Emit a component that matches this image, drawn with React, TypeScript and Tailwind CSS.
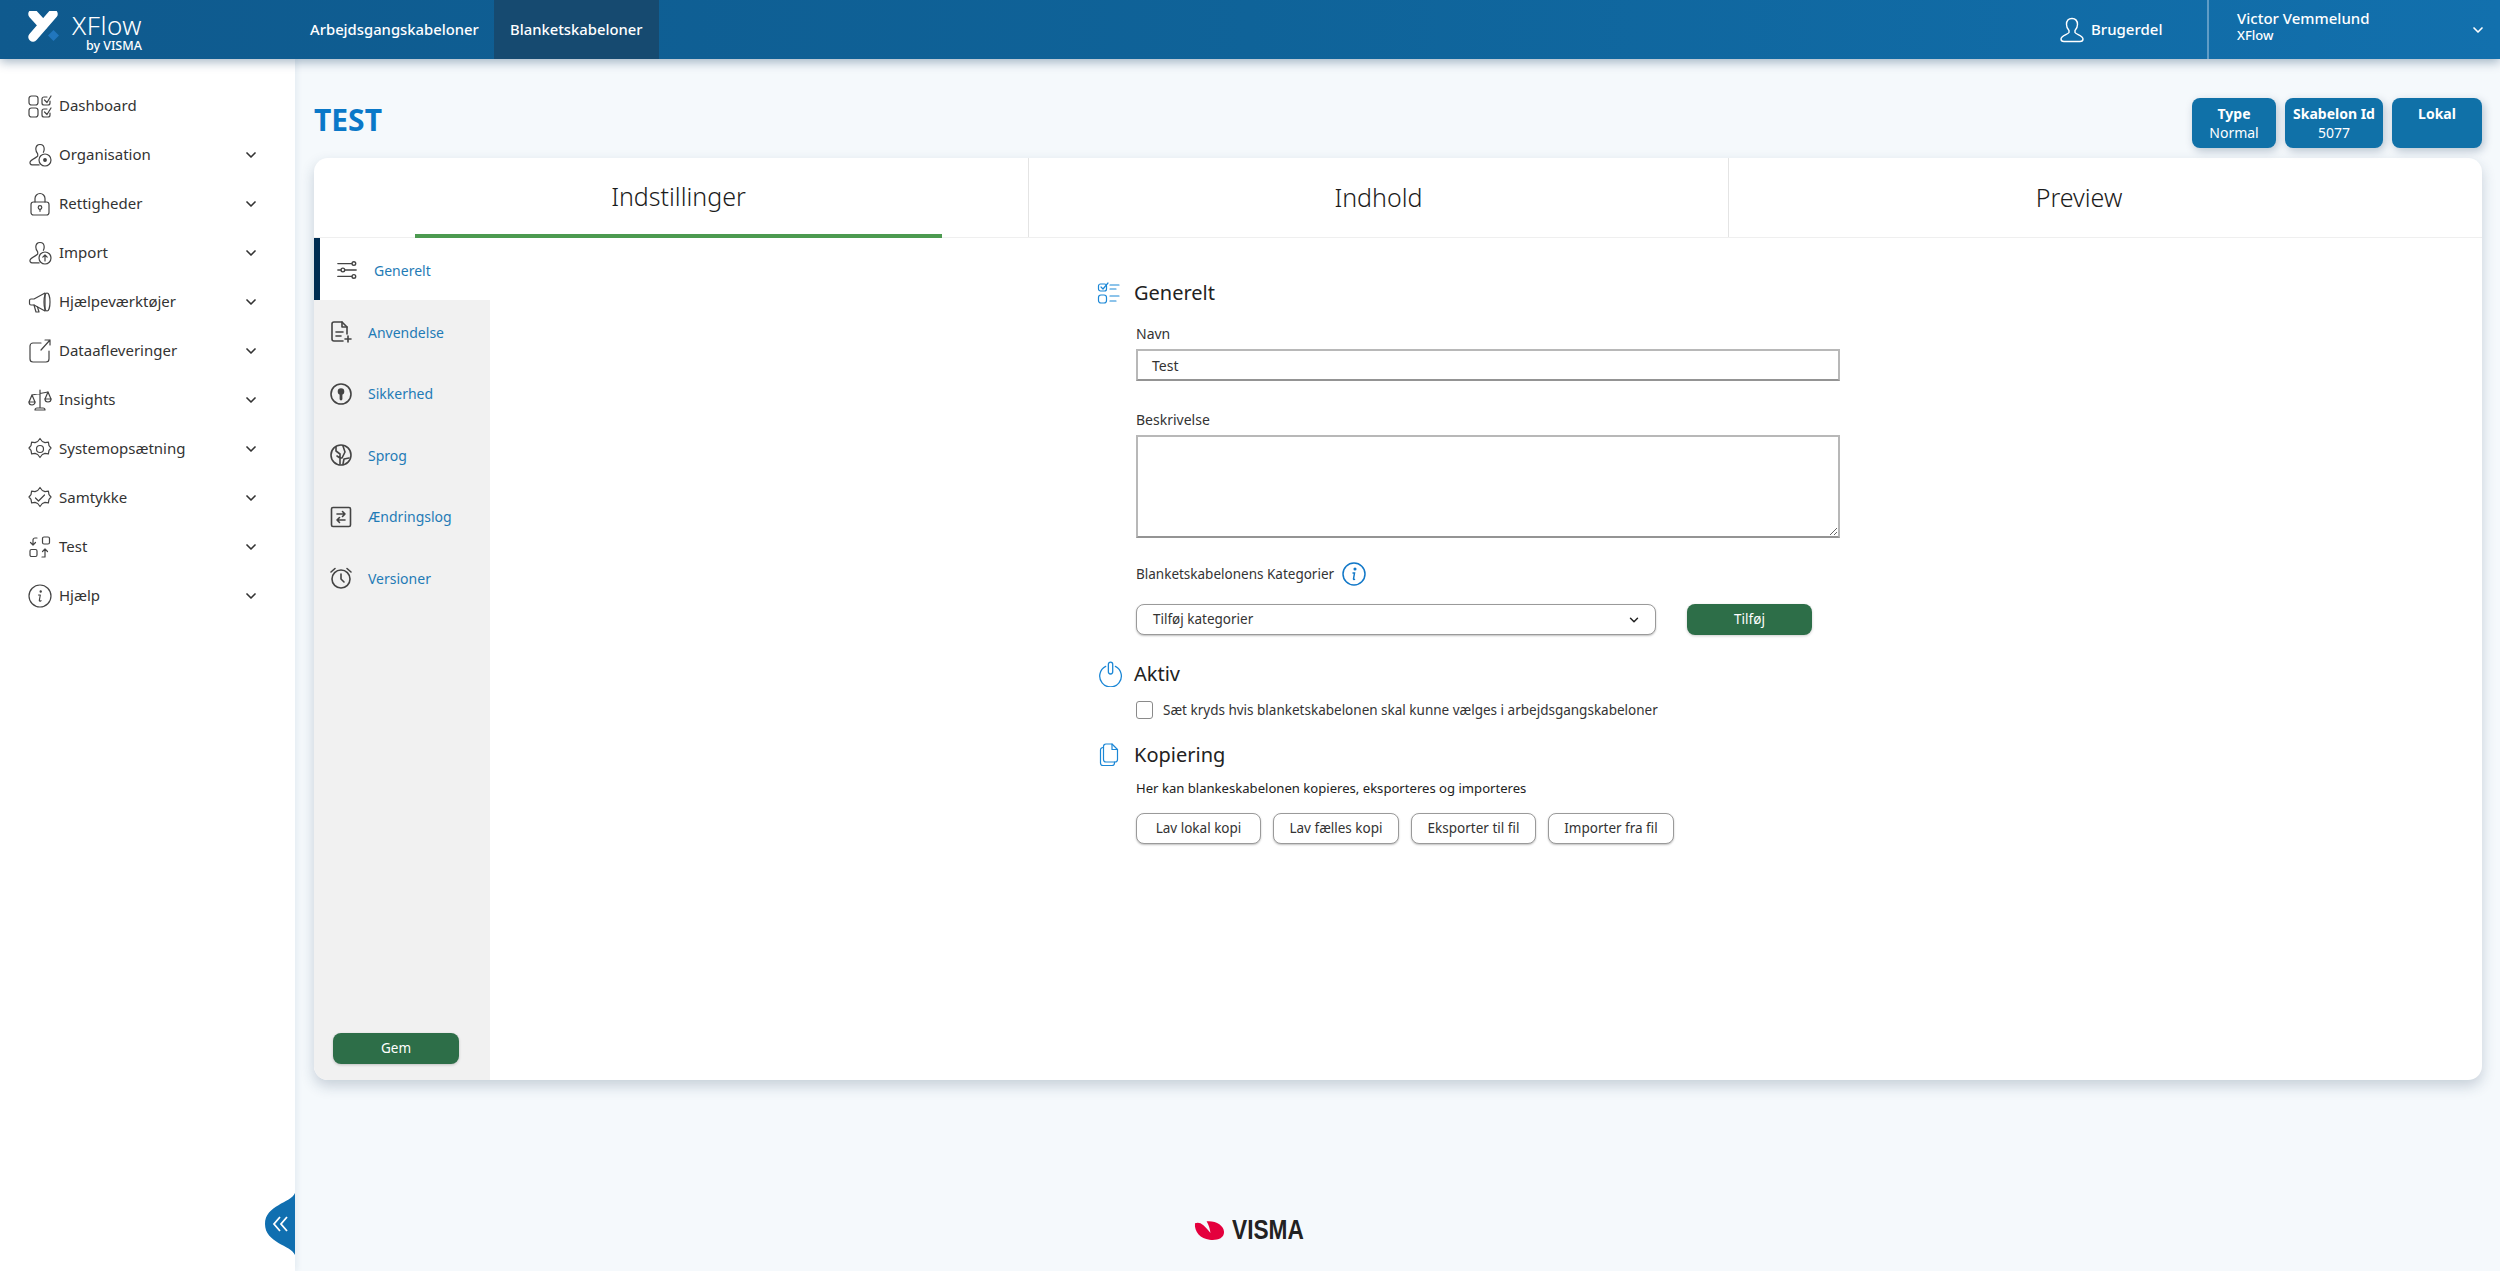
import type { ReactNode } from "react";
import { ChevronDown } from "lucide-react";

function Ico({ size = 24, stroke = 1.2, className = "", children }: { size?: number; stroke?: number; className?: string; children: ReactNode }) {
  return (
    <svg
      width={size}
      height={size}
      viewBox="0 0 24 24"
      fill="none"
      stroke="currentColor"
      strokeWidth={stroke}
      strokeLinecap="round"
      strokeLinejoin="round"
      className={className}
    >
      {children}
    </svg>
  );
}

const personPath = "M12 1.5c-2.6 0-4.2 2-4.2 4.6 0 2 .9 3.6 1.9 4.8v2.2c-.6 1.2-6.7 3.6-7.6 5.8-.5 1.4.4 3 2 3h7";
const gearPath = "M12 1.500 14.300 4.500l2.700 1.100 3.400-.4.600 3.400 2 2.400-2 2.400-.6 3.400-3.400-.4-2.700 1.100-2.300 3-2.300-3-2.700-1.100-3.400.4-.6-3.400-2-2.400 2-2.400.6-3.400 3.400.4 2.700-1.100z";

const menu: { label: string; icon: ReactNode; chevron?: boolean }[] = [
  {
    label: "Dashboard",
    icon: (
      <>
        <rect x="1" y="2" width="9" height="9" rx="2.5" />
        <rect x="1" y="14" width="9" height="9" rx="2.5" />
        <path d="M22 7v2a2 2 0 0 1-2 2h-4a2 2 0 0 1-2-2V5a2 2 0 0 1 2-2h3M16.5 6l2.5 2.5L23 2" />
        <path d="M22 19v2a2 2 0 0 1-2 2h-4a2 2 0 0 1-2-2v-4a2 2 0 0 1 2-2h3M16.5 18l2.5 2.5L23 14" />
      </>
    ),
  },
  {
    label: "Organisation",
    chevron: true,
    icon: (
      <>
        <path d={personPath} />
        <path d="M12 1.5c2.6 0 4.2 2 4.2 4.6 0 1.2-.3 2.2-.8 3.2" />
        <circle cx="17" cy="17" r="6" />
        <circle cx="17" cy="17" r="1.3" fill="currentColor" />
      </>
    ),
  },
  {
    label: "Rettigheder",
    chevron: true,
    icon: (
      <>
        <rect x="3" y="10" width="18" height="13" rx="2.5" />
        <path d="M7 10V6.5a5 5 0 0 1 10 0V10" />
        <circle cx="12" cy="15.5" r="1.8" />
        <path d="M12 17.3v2" />
      </>
    ),
  },
  {
    label: "Import",
    chevron: true,
    icon: (
      <>
        <path d={personPath} />
        <path d="M12 1.5c2.6 0 4.2 2 4.2 4.6 0 1.2-.3 2.2-.8 3.2" />
        <circle cx="17" cy="17" r="6" />
        <path d="M17 20v-6M14.8 16.2 17 14l2.2 2.2" />
      </>
    ),
  },
  {
    label: "Hjælpeværktøjer",
    chevron: true,
    icon: (
      <>
        <path d="M17 3 6 9H3a1.5 1.5 0 0 0-1.5 1.5v3A1.5 1.5 0 0 0 3 15h3l11 6z" />
        <path d="M6 15l2 7h3l-1.5-5" />
        <ellipse cx="19" cy="12" rx="3" ry="9" />
      </>
    ),
  },
  {
    label: "Dataafleveringer",
    chevron: true,
    icon: (
      <>
        <path d="M13 4H5a3 3 0 0 0-3 3v13a3 3 0 0 0 3 3h13a3 3 0 0 0 3-3v-8" />
        <path d="M13 11 22 1M17 1h5v5" />
      </>
    ),
  },
  {
    label: "Insights",
    chevron: true,
    icon: (
      <>
        <path d="M12 2v18M7 22h10a2 2 0 0 0-2-2H9a2 2 0 0 0-2 2zM4 7l16-3" />
        <path d="M4 7 1 14h6zM20 4l-3 7h6z" />
        <path d="M1 14a3 3 0 0 0 6 0M17 11a3 3 0 0 0 6 0" />
      </>
    ),
  },
  {
    label: "Systemopsætning",
    chevron: true,
    icon: (
      <>
        <path d={gearPath} />
        <circle cx="12" cy="12" r="3.500" />
      </>
    ),
  },
  {
    label: "Samtykke",
    chevron: true,
    icon: (
      <>
        <path d={gearPath} />
        <path d="M7.500 12l3 3 6-6" />
      </>
    ),
  },
  {
    label: "Test",
    chevron: true,
    icon: (
      <>
        <rect x="14.500" y="2" width="7" height="7" rx="1.500" />
        <rect x="2" y="14.500" width="7" height="7" rx="1.500" />
        <path d="M9 3H7a2 2 0 0 0-2 2v5M2.500 7.500 5 10l2.500-2.500" />
        <path d="M14 22h3v-8M14.500 16.500 17 14l2.500 2.500" />
      </>
    ),
  },
  {
    label: "Hjælp",
    chevron: true,
    icon: (
      <>
        <circle cx="12" cy="12" r="11" />
        <path d="M10.500 11h1.800l-1 5.500c0 .8.800.8 1.700.2" />
        <circle cx="12.700" cy="7.500" r=".6" fill="currentColor" />
      </>
    ),
  },
];

const subNav: { label: string; icon: ReactNode }[] = [
  {
    label: "Anvendelse",
    icon: (
      <>
        <path d="M14 21H5a2 2 0 0 1-2-2V4a2 2 0 0 1 2-2h8l5 5v7" />
        <path d="M13 2v5h5M7 12h7M7 16h5M19 16v6M16 19h6" />
      </>
    ),
  },
  {
    label: "Sikkerhed",
    icon: (
      <>
        <circle cx="12" cy="12" r="10" />
        <circle cx="12" cy="9.500" r="2.500" fill="currentColor" />
        <path d="M12 11v6" strokeWidth={2.800} />
      </>
    ),
  },
  {
    label: "Sprog",
    icon: (
      <>
        <circle cx="12" cy="12" r="10" />
        <path d="M7 4v4l4 3 0 4 2 0 3-6-2-6M8 13l3 2v6M14 21l1-5 5-1" />
      </>
    ),
  },
  {
    label: "Ændringslog",
    icon: (
      <>
        <rect x="2.500" y="2.500" width="19" height="19" rx="1.500" />
        <path d="M8 9h8M13.500 6.500 16 9l-2.500 2.500M16 15H8M10.500 12.500 8 15l2.500 2.500" />
      </>
    ),
  },
  {
    label: "Versioner",
    icon: (
      <>
        <circle cx="12" cy="13" r="9" />
        <path d="M12 8v5l3 3M2 6l4-3.500M22 6l-4-3.500" />
      </>
    ),
  },
];

function Badge({ title, value, w }: { title: string; value?: string; w: string }) {
  return (
    <div className={`${w} h-[50px] rounded-lg bg-[#1071a8] text-white text-center text-[14px] leading-[19px] pt-[6px] shadow-[2px_3px_8px_rgba(0,40,80,0.25)]`}>
      <div className="font-bold">{title}</div>
      <div>{value}</div>
    </div>
  );
}

function SectionHead({ icon, children }: { icon: ReactNode; children: ReactNode }) {
  return (
    <div className="flex items-center h-[26px]">
      <div className="w-[44px] pl-[7px] flex text-[#1b87d6]">{icon}</div>
      <h2 className="text-[20px] text-[#222]">{children}</h2>
    </div>
  );
}

function OutlineButton({ label, w }: { label: string; w: string }) {
  return (
    <div className={`${w} h-[31px] flex items-center justify-center rounded-lg bg-white border border-[#9a9a9a] text-[13.5px] text-[#333] shadow-[0_1px_2px_rgba(0,0,0,0.25)]`}>
      {label}
    </div>
  );
}

export default function App() {
  return (
    <div className="h-[1271px] overflow-hidden flex flex-col bg-[#f5f9fc] font-['Noto_Sans','Open_Sans',sans-serif]">
      <header className="relative z-20 h-[59px] shrink-0 flex items-stretch text-white bg-gradient-to-r from-[#0f5a8e] via-[#0f6399] to-[#1270ad] shadow-[0_3px_10px_rgba(0,50,90,0.35)]">
        <div className="w-[310px] flex pl-[28px] pt-[11px]">
          <svg width="32" height="31" viewBox="0 0 32 31">
            <path d="M5 3l10 11" fill="none" stroke="#fff" strokeWidth="9.500" strokeLinecap="round" />
            <path d="M25 3 5 26" fill="none" stroke="#fff" strokeWidth="9.500" strokeLinecap="round" />
            <path d="M25.500 19l5.500 5.500-5.500 5.500-5.500-5.500z" fill="#2176bd" />
          </svg>
          <div className="ml-[12px] pt-[1px] flex flex-col items-end">
            <span className="text-[26px] leading-[27px] font-light tracking-[0.5px]">XFlow</span>
            <span className="text-[12.5px] leading-[14px] font-medium">by VISMA</span>
          </div>
        </div>
        <div className="flex items-center text-[14.8px] font-medium w-[184px]">Arbejdsgangskabeloner</div>
        <div className="flex items-center bg-[#164a70] px-[16px] text-[14.8px] font-medium">Blanketskabeloner</div>
        <div className="flex-1" />
        <div className="flex items-center w-[147px] text-[15px] font-medium">
          <svg width="24" height="26" viewBox="0 0 24 26" fill="none" stroke="currentColor" strokeWidth="1.400" className="mr-[7px]">
            <path d="M12 1.500c-3.500 0-5.500 2.500-5.500 6 0 2.500 1 4.500 2.500 6v2c-1 1.800-8 3.500-8 6.500 0 1.500 1 2.500 3 2.500h16c2 0 3-1 3-2.500 0-3-7-4.700-8-6.500v-2c1.500-1.500 2.500-3.500 2.500-6 0-3.500-2-6-5.500-6z" />
          </svg>
          Brugerdel
        </div>
        <div className="w-[2px] bg-[#5f9cc6]" />
        <div className="flex-1 max-w-[291px] flex items-center pl-[28px] pr-[14px]">
          <div className="flex-1 -mt-[7px]">
            <div className="text-[15px] leading-[17px] font-medium">Victor Vemmelund</div>
            <div className="text-[13px] leading-[16px] font-medium">XFlow</div>
          </div>
          <ChevronDown size={16} strokeWidth={2.500} />
        </div>
      </header>

      <div className="flex-1 flex min-h-0">
        <aside className="relative z-10 w-[295px] shrink-0 bg-white pt-[22px] shadow-[2px_0_6px_rgba(30,80,120,0.08)]">
          {menu.map((item) => (
            <div key={item.label} className="h-[49px] flex items-center pl-[28px] pr-[36px] text-[#333]">
              <Ico className="shrink-0 mr-[7px] text-[#444]">{item.icon}</Ico>
              <span className="flex-1 text-[15px]">{item.label}</span>
              {item.chevron && <ChevronDown size={16} strokeWidth={2.500} className="text-[#333]" />}
            </div>
          ))}
          <svg width="30" height="62" viewBox="0 0 30 62" className="absolute right-0 top-[1134px]">
            <path d="M30 0v62C26 52 0 50 0 31S26 10 30 0z" fill="#106fb0" />
            <path d="M15 24l-6 7 6 7M22 24l-6 7 6 7" fill="none" stroke="#fff" strokeWidth="1.800" />
          </svg>
        </aside>

        <main className="flex-1 min-w-0 pl-[19px] pr-[18px] pt-[39px]">
          <div className="flex items-start justify-between h-[60px]">
            <h1 className="text-[30px] leading-[40px] font-bold text-[#0a78c8] mt-[2px]">TEST</h1>
            <div className="flex gap-[9px]">
              <Badge title="Type" value="Normal" w="w-[84px]" />
              <Badge title="Skabelon Id" value="5077" w="w-[98px]" />
              <Badge title="Lokal" w="w-[90px]" />
            </div>
          </div>

          <section className="h-[922px] rounded-[14px] bg-white overflow-hidden flex flex-col shadow-[0_6px_14px_rgba(30,60,90,0.22)]">
            <div className="h-[80px] shrink-0 flex border-b border-[#efefef] text-[25px] font-light text-[#1c1c1c]">
              <div className="w-[715px] pl-[101px] pr-[86px] border-r border-[#e4e4e4]">
                <div className="h-[80px] pt-[2px] flex items-center justify-center border-b-[4px] border-[#4c9a50]">Indstillinger</div>
              </div>
              <div className="w-[700px] flex items-center justify-center border-r border-[#e4e4e4]">Indhold</div>
              <div className="flex-1 flex items-center justify-center pr-[53px]">Preview</div>
            </div>

            <div className="flex-1 flex min-h-0">
              <nav className="w-[176px] shrink-0 flex flex-col bg-[#f1f1f1] text-[14px] text-[#1f7bb6]">
                <div className="h-[62px] flex items-center bg-white border-l-[6px] border-[#002d52] pl-[16px] pt-[2px]">
                  <Ico size={22} stroke={1.5} className="mr-[16px] text-[#444]">
                    <path d="M2 5h15M2 12h3M10 12h12M2 19h15" />
                    <circle cx="19.500" cy="5" r="2" />
                    <circle cx="7.500" cy="12" r="2" />
                    <circle cx="19.500" cy="19" r="2" />
                  </Ico>
                  Generelt
                </div>
                {subNav.map((item) => (
                  <div key={item.label} className="h-[61.500px] flex items-center pl-[15px] pt-[3px]">
                    <Ico size={24} stroke={1.6} className="mr-[15px] text-[#444]">{item.icon}</Ico>
                    {item.label}
                  </div>
                ))}
                <div className="flex-1" />
                <div className="h-[31px] ml-[19px] mr-[31px] mb-[16px] flex items-center justify-center rounded-lg bg-[#2d6e48] text-[13.500px] text-white shadow-[0_1px_3px_rgba(0,0,0,0.2)]">Gem</div>
              </nav>

              <div className="flex-1 pl-[600px] pt-[42px] text-[#333]">
                <SectionHead
                  icon={
                    <Ico size={24}>
                      <rect x="1.500" y="3" width="8" height="7" rx="2" />
                      <rect x="1.500" y="14" width="8" height="8" rx="2.500" />
                      <path d="M4 6l2 2 5-6M13 4h9M13 8h6M13 15h9M13 20h6" />
                    </Ico>
                  }
                >
                  Generelt
                </SectionHead>
                <div className="pl-[46px] w-[750px]">
                  <label className="block mt-[18px] text-[14px] leading-[20px]">Navn</label>
                  <div className="mt-[5px] h-[32px] flex items-center pl-[14px] border-2 border-[#b8b8b8] border-b-[#949494] bg-white text-[14px]">Test</div>
                  <label className="block mt-[29px] text-[14px] leading-[20px]">Beskrivelse</label>
                  <textarea readOnly className="block mt-[5px] w-full h-[103px] border-2 border-[#b8b8b8] border-b-[#949494] bg-white" />
                  <div className="mt-[24px] flex items-center h-[24px] text-[13.500px]">
                    Blanketskabelonens Kategorier
                    <svg width="24" height="24" viewBox="0 0 24 24" fill="none" stroke="#1278c8" strokeWidth="1.500" className="ml-[8px]">
                      <circle cx="12" cy="12" r="11" />
                      <path d="M10.500 11h2l-1 6c0 .6.600.8 1.500.2" />
                      <circle cx="13" cy="7" r=".8" fill="#1278c8" />
                    </svg>
                  </div>
                  <div className="mt-[18px] flex items-center">
                    <div className="w-[520px] h-[31px] flex items-center justify-between pl-[16px] pr-[14px] rounded-lg bg-white border border-[#9a9a9a] text-[13.500px] shadow-[0_1px_2px_rgba(0,0,0,0.25)]">
                      Tilføj kategorier
                      <ChevronDown size={14} strokeWidth={2.500} className="text-[#222]" />
                    </div>
                    <div className="ml-[31px] w-[125px] h-[31px] flex items-center justify-center rounded-lg bg-[#2d6e48] text-[13.500px] text-white shadow-[0_1px_3px_rgba(0,0,0,0.2)]">Tilføj</div>
                  </div>
                </div>

                <div className="mt-[26px]">
                  <SectionHead
                    icon={
                      <Ico size={26}>
                        <path d="M8 5a10 10 0 1 0 9 0" />
                        <rect x="10.500" y="1" width="4" height="11" rx="2" />
                      </Ico>
                    }
                  >
                    Aktiv
                  </SectionHead>
                </div>
                <div className="mt-[14px] pl-[46px] flex items-center h-[18px] text-[13.500px]">
                  <div className="w-[17px] h-[18px] mr-[10px] rounded-[3px] border border-[#8a8a8a] bg-white" />
                  Sæt kryds hvis blanketskabelonen skal kunne vælges i arbejdsgangskabeloner
                </div>

                <div className="mt-[23px]">
                  <SectionHead
                    icon={
                      <Ico size={24}>
                        <path d="M15 1H9a2.500 2.500 0 0 0-2.500 2.500v13A2.500 2.500 0 0 0 9 19h9a2.500 2.500 0 0 0 2.500-2.500V6.500z" />
                        <path d="M15 1v5.500h5.500M6.500 4.500H6A2.500 2.500 0 0 0 3.500 7v13A2.500 2.500 0 0 0 6 22.500h9a2.500 2.500 0 0 0 2.500-2.500v-1" />
                      </Ico>
                    }
                  >
                    Kopiering
                  </SectionHead>
                </div>
                <p className="mt-[11px] pl-[46px] text-[13.100px] leading-[18px] text-[#222]">Her kan blankeskabelonen kopieres, eksporteres og importeres</p>
                <div className="mt-[16px] pl-[46px] flex gap-[12px]">
                  <OutlineButton label="Lav lokal kopi" w="w-[125px]" />
                  <OutlineButton label="Lav fælles kopi" w="w-[126px]" />
                  <OutlineButton label="Eksporter til fil" w="w-[125px]" />
                  <OutlineButton label="Importer fra fil" w="w-[126px]" />
                </div>
              </div>
            </div>
          </section>

          <div className="mt-[139px] ml-[880px] flex items-center gap-[7px]">
            <svg width="31" height="21" viewBox="0 0 32 21">
              <path d="M1 3C6 1 10 4 17 13 16 6 14 3 13 1c9-1 18 4 18 11 0 7-8 9-15 8C7 19 0 12 1 3z" fill="#e4003d" />
            </svg>
            <span className="text-[27px] leading-[22px] font-bold text-[#222] origin-left scale-x-[0.84] font-['Liberation_Sans',sans-serif]">VISMA</span>
          </div>
        </main>
      </div>
    </div>
  );
}
